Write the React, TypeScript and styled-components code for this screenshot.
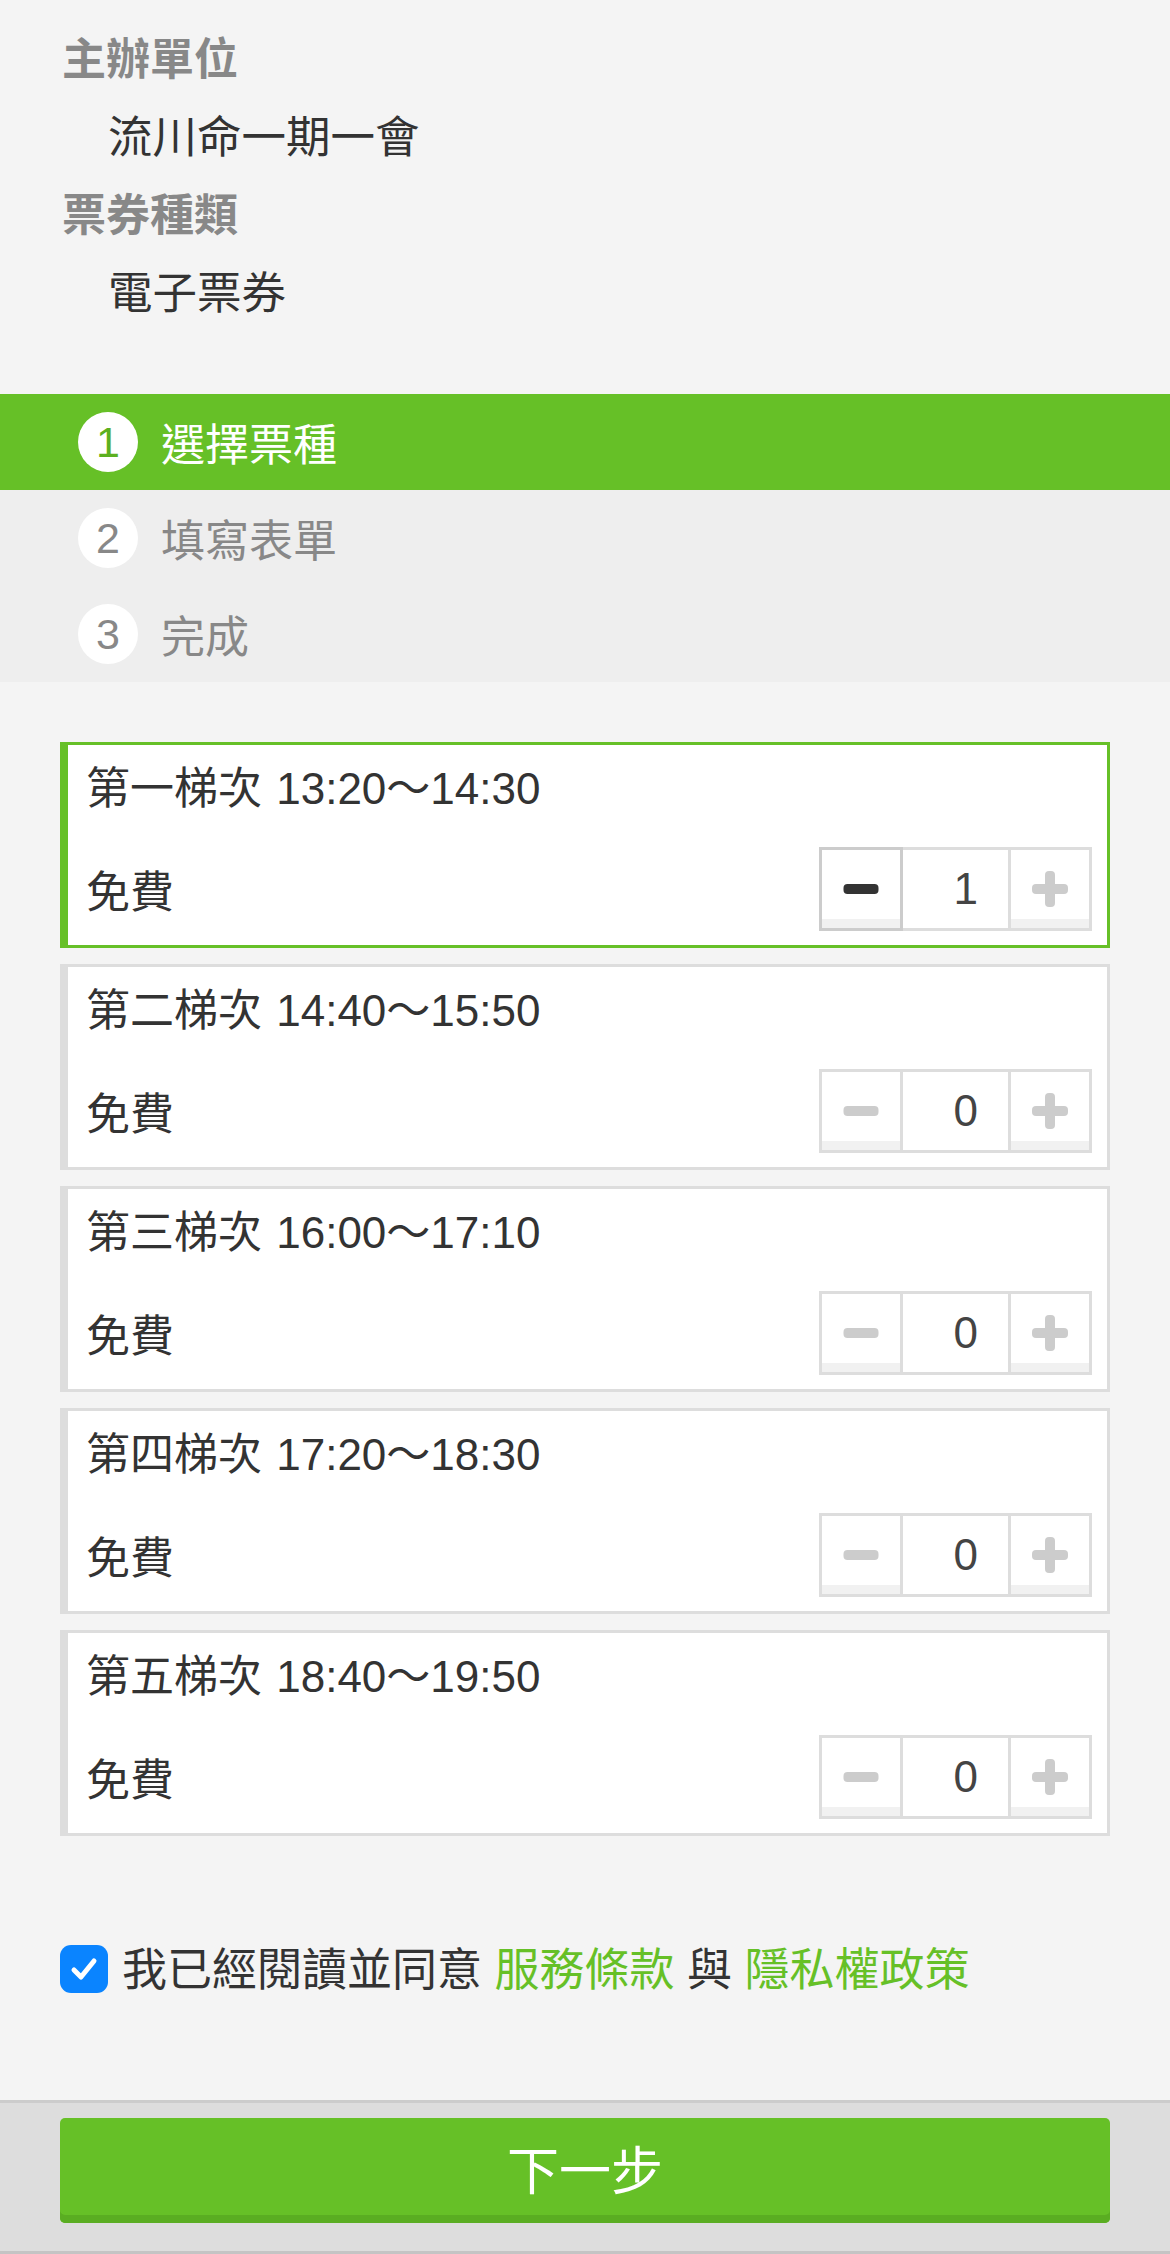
import React, { useState } from "react";
import styled, { createGlobalStyle } from "styled-components";

const GREEN = "#66c027";
const FONT = `"Liberation Sans", "Noto Sans CJK TC", "Noto Sans", sans-serif`;

const Global = createGlobalStyle`
  html, body { margin: 0; padding: 0; background: #f4f4f4; }
  body { font-family: ${FONT}; -webkit-font-smoothing: antialiased; }
  * { box-sizing: border-box; }
`;

const Page = styled.div`
  width: 1170px;
  min-height: 2254px;
  display: flex;
  flex-direction: column;
  background: #f4f4f4;
`;

const Info = styled.section`
  padding: 21px 62px 0;
  margin-bottom: 61px;
  display: flex;
  flex-direction: column;
`;

const InfoLabel = styled.div`
  font-size: 44px;
  line-height: 78px;
  height: 78px;
  font-weight: 700;
  color: #888;
`;

const InfoValue = styled.div`
  font-size: 44.5px;
  line-height: 78px;
  height: 78px;
  color: #333;
  padding-left: 46px;
`;

const Steps = styled.ol`
  list-style: none;
  margin: 0;
  padding: 0;
  background: #eeeeee;
`;

const StepRow = styled.li<{ $active?: boolean }>`
  height: 96px;
  display: flex;
  align-items: center;
  gap: 23px;
  padding-left: 78px;
  background: ${(p) => (p.$active ? GREEN : "transparent")};
  color: ${(p) => (p.$active ? "#fff" : "#888")};
  font-size: 44px;
`;

const StepNum = styled.span<{ $active?: boolean }>`
  width: 60px;
  height: 60px;
  border-radius: 50%;
  background: #fff;
  color: ${(p) => (p.$active ? "#5cb020" : "#888")};
  display: flex;
  align-items: center;
  justify-content: center;
  font-size: 43px;
  font-family: "Liberation Sans", sans-serif;
`;

const Tickets = styled.div`
  margin-top: 60px;
  padding: 0 60px;
  display: flex;
  flex-direction: column;
  gap: 16px;
`;

const Card = styled.div<{ $selected?: boolean }>`
  background: #fff;
  border: 3px solid ${(p) => (p.$selected ? GREEN : "#dddddd")};
  border-left-width: 8px;
  padding: 14px 15px 14px 18px;
  display: flex;
  flex-direction: column;
  gap: 28px;
`;

const CardTitle = styled.div`
  font-size: 44px;
  line-height: 60px;
  height: 60px;
  color: #333;
  word-spacing: 2px;
`;

const CardRow = styled.div`
  display: flex;
  align-items: center;
  justify-content: space-between;
  height: 84px;
`;

const Price = styled.div`
  font-size: 44px;
  color: #333;
`;

const Stepper = styled.div`
  display: flex;
  height: 84px;
`;

const StepBtn = styled.button<{ $on?: boolean }>`
  width: 84px;
  height: 84px;
  padding: 0;
  margin: 0;
  background: #fff;
  border: 3px solid ${(p) => (p.$on ? "#cccccc" : "#dddddd")};
  box-shadow: inset 0 -9px 0 #f1f1f1;
  display: flex;
  align-items: center;
  justify-content: center;
  cursor: pointer;
`;

const Qty = styled.div`
  width: 105px;
  height: 84px;
  border-top: 3px solid #dddddd;
  border-bottom: 3px solid #dddddd;
  display: flex;
  align-items: center;
  justify-content: flex-end;
  padding-right: 30px;
  font-size: 44px;
  color: #444;
  font-family: "Liberation Sans", sans-serif;
`;

const Agree = styled.label`
  margin-top: 100px;
  padding: 0 60px;
  height: 60px;
  display: flex;
  align-items: center;
  gap: 14px;
  font-size: 45px;
  color: #333;
`;

const Box = styled.span`
  width: 48px;
  height: 48px;
  border-radius: 11px;
  background: #0a84ff;
  display: flex;
  align-items: center;
  justify-content: center;
  margin-top: 6px;
  flex: none;
`;

const Link = styled.a`
  color: ${GREEN};
  text-decoration: none;
`;

const AgreeText = styled.span`
  white-space: nowrap;
`;

const Spacer = styled.div`
  flex: 1;
`;

const Footer = styled.footer`
  border-top: 3px solid #cccccc;
  border-bottom: 3px solid #c4c4c4;
  background: #dddddd;
  padding: 15px 60px 28px;
`;

const NextBtn = styled.button`
  width: 100%;
  height: 105px;
  border: none;
  border-radius: 5px;
  background: ${GREEN};
  box-shadow: inset 0 -8px 0 #5aad22;
  color: #fff;
  font-size: 52px;
  font-family: ${FONT};
  padding: 0 0 6px;
  cursor: pointer;
`;

const Minus = ({ color }: { color: string }) => (
  <svg width="36" height="12" viewBox="0 0 36 12">
    <rect x="0.5" y="1" width="35" height="10" rx="4" fill={color} />
  </svg>
);

const Plus = ({ color }: { color: string }) => (
  <svg width="36" height="36" viewBox="0 0 36 36">
    <rect x="0" y="13" width="36" height="10" rx="4" fill={color} />
    <rect x="13" y="0" width="10" height="36" rx="4" fill={color} />
  </svg>
);

const sessions = [
  { name: "第一梯次 13:20～14:30", qty: 1 },
  { name: "第二梯次 14:40～15:50", qty: 0 },
  { name: "第三梯次 16:00～17:10", qty: 0 },
  { name: "第四梯次 17:20～18:30", qty: 0 },
  { name: "第五梯次 18:40～19:50", qty: 0 },
];

export default function App() {
  const [qtys] = useState(sessions.map((s) => s.qty));
  return (
    <Page>
      <Global />
      <Info>
        <InfoLabel>主辦單位</InfoLabel>
        <InfoValue>流川命一期一會</InfoValue>
        <InfoLabel>票券種類</InfoLabel>
        <InfoValue>電子票券</InfoValue>
      </Info>

      <Steps>
        <StepRow $active>
          <StepNum $active>1</StepNum>
          <span>選擇票種</span>
        </StepRow>
        <StepRow>
          <StepNum>2</StepNum>
          <span>填寫表單</span>
        </StepRow>
        <StepRow>
          <StepNum>3</StepNum>
          <span>完成</span>
        </StepRow>
      </Steps>

      <Tickets>
        {sessions.map((s, i) => {
          const q = qtys[i];
          const on = q > 0;
          return (
            <Card key={s.name} $selected={on}>
              <CardTitle>{s.name}</CardTitle>
              <CardRow>
                <Price>免費</Price>
                <Stepper>
                  <StepBtn $on={on} aria-label="減少">
                    <Minus color={on ? "#333" : "#cccccc"} />
                  </StepBtn>
                  <Qty>{q}</Qty>
                  <StepBtn aria-label="增加">
                    <Plus color="#cccccc" />
                  </StepBtn>
                </Stepper>
              </CardRow>
            </Card>
          );
        })}
      </Tickets>

      <Agree>
        <Box>
          <svg width="32" height="32" viewBox="0 0 32 32">
            <path
              d="M6 17 L13 24 L26 8"
              fill="none"
              stroke="#fff"
              strokeWidth="5"
              strokeLinecap="round"
              strokeLinejoin="round"
            />
          </svg>
        </Box>
        <AgreeText>
          我已經閱讀並同意 <Link>服務條款</Link> 與 <Link>隱私權政策</Link>
        </AgreeText>
      </Agree>

      <Spacer />

      <Footer>
        <NextBtn>下一步</NextBtn>
      </Footer>
    </Page>
  );
}
